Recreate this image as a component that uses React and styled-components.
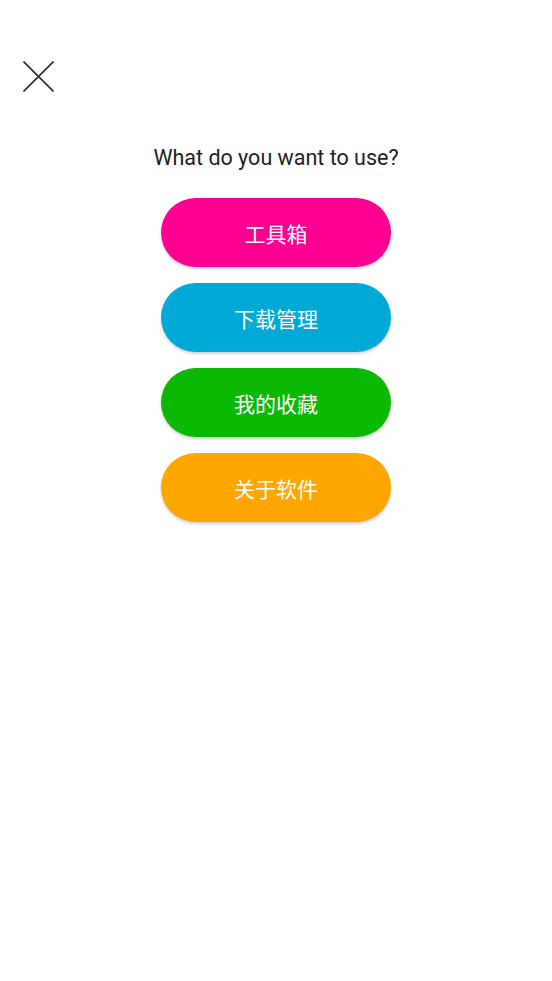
import React from "react";
import styled, { createGlobalStyle } from "styled-components";

const GlobalStyle = createGlobalStyle`
  html, body {
    margin: 0;
    padding: 0;
    background: #fff;
  }
  body {
    font-family: Roboto, "Noto Sans CJK SC", sans-serif;
  }
`;

const Screen = styled.div`
  width: 552px;
  height: 981px;
  box-sizing: border-box;
  padding: 61px 0 0 23px;
  display: flex;
  flex-direction: column;
`;

const CloseButton = styled.button`
  width: 31px;
  height: 31px;
  padding: 0;
  border: none;
  background: none;
  display: flex;
  cursor: pointer;
`;

const Content = styled.div`
  margin-left: -23px;
  display: flex;
  flex-direction: column;
  align-items: center;
`;

const Title = styled.h1`
  margin: 52px 0 0;
  font-family: Roboto, sans-serif;
  font-weight: 400;
  font-size: 21.5px;
  line-height: 28px;
  color: #1e1e1e;
`;

const Menu = styled.div`
  margin-top: 26px;
  display: flex;
  flex-direction: column;
  gap: 16px;
`;

const MenuButton = styled.button`
  width: 230px;
  height: 69px;
  border: none;
  border-radius: 35px;
  background: ${(p) => p.color};
  color: #fff;
  font-family: "Noto Sans CJK SC", sans-serif;
  font-size: 21px;
  padding-top: 2px;
  box-shadow: 0 2px 3px rgba(0, 0, 0, 0.18);
  cursor: pointer;
`;

const items = [
  { label: "工具箱", color: "#ff0092" },
  { label: "下载管理", color: "#00a9d6" },
  { label: "我的收藏", color: "#0bb803" },
  { label: "关于软件", color: "#ffa600" }
];

const App = () => (
  <>
    <GlobalStyle />
    <Screen>
      <CloseButton aria-label="close">
        <svg width="31" height="31" viewBox="0 0 31 31">
          <path d="M0.5 0.5 L30.5 30.5 M30.5 0.5 L0.5 30.5" stroke="#2b2b2b" strokeWidth="1.6" fill="none" />
        </svg>
      </CloseButton>
      <Content>
        <Title>What do you want to use?</Title>
        <Menu>
          {items.map((item) => (
            <MenuButton key={item.label} color={item.color}>
              {item.label}
            </MenuButton>
          ))}
        </Menu>
      </Content>
    </Screen>
  </>
);

export default App;
